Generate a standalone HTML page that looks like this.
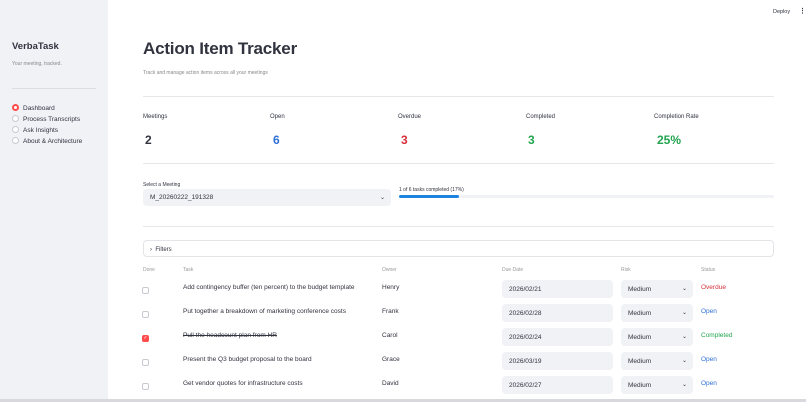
<!DOCTYPE html>
<html><head><meta charset="utf-8"><style>
*{box-sizing:border-box;margin:0;padding:0}
body{width:806px;height:402px;overflow:hidden;font-family:"Liberation Sans",sans-serif;color:#31333f;background:#fff;position:relative}
.a{position:absolute;white-space:nowrap;margin-top:1.5px}
.sb{position:absolute;left:0;top:0;width:108px;height:402px;background:#f0f2f6}
.hr{position:absolute;height:1px;background:#e6e7ea}
.rad{position:absolute;width:7px;height:7px;border-radius:50%;border:1px solid #c8cad0;background:#fff}
.box{position:absolute;height:18px;background:#f0f2f6;border-radius:4px;font-size:6.5px;color:#31333f;padding-left:7px;line-height:19px}
.cb{position:absolute;left:142px;width:7px;height:7px;border:1px solid #c8cad0;border-radius:2px;background:#fff}
.chev{position:absolute;font-size:6px;color:#31333f}
</style></head><body>
<div class="sb"></div>
<div class="a" style="left:12px;top:39px;font-size:9.5px;font-weight:bold;color:#31333f">VerbaTask</div>
<div class="a" style="left:12px;top:59px;font-size:5px;color:#888">Your meeting, tracked.</div>
<div class="hr" style="left:12px;top:88px;width:84px;background:#dcdde2"></div>
<div class="rad" style="left:12px;top:104px;border:2px solid #ff4b4b"></div>
<div class="a" style="left:23px;top:103px;font-size:6.5px">Dashboard</div>
<div class="rad" style="left:12px;top:115px"></div>
<div class="a" style="left:23px;top:114px;font-size:6.5px">Process Transcripts</div>
<div class="rad" style="left:12px;top:126px"></div>
<div class="a" style="left:23px;top:125px;font-size:6.5px">Ask Insights</div>
<div class="rad" style="left:12px;top:137px"></div>
<div class="a" style="left:23px;top:136px;font-size:6.5px">About &amp; Architecture</div>

<div class="a" style="left:773px;top:7px;font-size:5.5px">Deploy</div>
<div class="a" style="left:799px;top:5px;font-size:7px;font-weight:bold">⋮</div>

<div class="a" style="left:143px;top:37px;font-size:17px;font-weight:bold;color:#31333f;letter-spacing:-0.2px">Action Item Tracker</div>
<div class="a" style="left:143px;top:68px;font-size:5px;color:#888">Track and manage action items across all your meetings</div>
<div class="hr" style="left:143px;top:96px;width:631px"></div>
<div class="a" style="left:143px;top:112px;font-size:6px">Meetings</div>
<div class="a" style="left:270px;top:112px;font-size:6px">Open</div>
<div class="a" style="left:398px;top:112px;font-size:6px">Overdue</div>
<div class="a" style="left:526px;top:112px;font-size:6px">Completed</div>
<div class="a" style="left:654px;top:112px;font-size:6px">Completion Rate</div>
<div class="a" style="left:145px;top:131px;font-size:12px;font-weight:bold">2</div>
<div class="a" style="left:273px;top:131px;font-size:12px;font-weight:bold;color:#2f6fd6">6</div>
<div class="a" style="left:401px;top:131px;font-size:12px;font-weight:bold;color:#d62f3a">3</div>
<div class="a" style="left:528px;top:131px;font-size:12px;font-weight:bold;color:#22a450">3</div>
<div class="a" style="left:657px;top:131px;font-size:12px;font-weight:bold;color:#22a450">25%</div>
<div class="hr" style="left:143px;top:163px;width:631px"></div>

<div class="a" style="left:143px;top:180px;font-size:5px">Select a Meeting</div>
<div class="box" style="left:143px;top:189px;width:248px;height:17px;line-height:18px">M_20260222_191328</div>
<div class="chev" style="left:380px;top:194px">⌄</div>
<div class="a" style="left:399px;top:185px;font-size:5px">1 of 6 tasks completed (17%)</div>
<div style="position:absolute;left:399px;top:195px;width:375px;height:3px;background:#f0f2f6;border-radius:2px"></div>
<div style="position:absolute;left:399px;top:195px;width:60px;height:3px;background:#1c83e1;border-radius:2px"></div>
<div class="hr" style="left:143px;top:226px;width:631px"></div>

<div style="position:absolute;left:143px;top:240px;width:631px;height:17px;border:1px solid #e3e4e8;border-radius:4px"></div>
<div class="a" style="left:150px;top:245px;font-size:6px">›&nbsp;&nbsp;Filters</div>

<div class="a" style="left:143px;top:265px;font-size:5px;color:#999">Done</div>
<div class="a" style="left:183px;top:265px;font-size:5px;color:#999">Task</div>
<div class="a" style="left:382px;top:265px;font-size:5px;color:#999">Owner</div>
<div class="a" style="left:502px;top:265px;font-size:5px;color:#999">Due Date</div>
<div class="a" style="left:621px;top:265px;font-size:5px;color:#999">Risk</div>
<div class="a" style="left:701px;top:265px;font-size:5px;color:#999">Status</div>

<div class="cb" style="top:287px"></div>
<div class="a" style="left:183px;top:282px;font-size:6.5px">Add contingency buffer (ten percent) to the budget template</div>
<div class="a" style="left:382px;top:282px;font-size:6.5px">Henry</div>
<div class="box" style="left:502px;top:280px;width:111px">2026/02/21</div>
<div class="box" style="left:621px;top:280px;width:72px">Medium</div><div class="chev" style="left:682px;top:285px">⌄</div>
<div class="a" style="left:701px;top:282px;font-size:6.5px;color:#d62f3a">Overdue</div>

<div class="cb" style="top:311px"></div>
<div class="a" style="left:183px;top:306px;font-size:6.5px">Put together a breakdown of marketing conference costs</div>
<div class="a" style="left:382px;top:306px;font-size:6.5px">Frank</div>
<div class="box" style="left:502px;top:304px;width:111px">2026/02/28</div>
<div class="box" style="left:621px;top:304px;width:72px">Medium</div><div class="chev" style="left:682px;top:309px">⌄</div>
<div class="a" style="left:701px;top:306px;font-size:6.5px;color:#2f6fd6">Open</div>

<div class="cb" style="top:335px;background:#ff4b4b;border-color:#ff4b4b;color:#fff;font-size:5px;line-height:5px;text-align:center">✓</div>
<div class="a" style="left:183px;top:330px;font-size:6.5px;text-decoration:line-through">Pull the headcount plan from HR</div>
<div class="a" style="left:382px;top:330px;font-size:6.5px">Carol</div>
<div class="box" style="left:502px;top:328px;width:111px">2026/02/24</div>
<div class="box" style="left:621px;top:328px;width:72px">Medium</div><div class="chev" style="left:682px;top:333px">⌄</div>
<div class="a" style="left:701px;top:330px;font-size:6.5px;color:#22a450">Completed</div>

<div class="cb" style="top:359px"></div>
<div class="a" style="left:183px;top:354px;font-size:6.5px">Present the Q3 budget proposal to the board</div>
<div class="a" style="left:382px;top:354px;font-size:6.5px">Grace</div>
<div class="box" style="left:502px;top:352px;width:111px">2026/03/19</div>
<div class="box" style="left:621px;top:352px;width:72px">Medium</div><div class="chev" style="left:682px;top:357px">⌄</div>
<div class="a" style="left:701px;top:354px;font-size:6.5px;color:#2f6fd6">Open</div>

<div class="cb" style="top:383px"></div>
<div class="a" style="left:183px;top:378px;font-size:6.5px">Get vendor quotes for infrastructure costs</div>
<div class="a" style="left:382px;top:378px;font-size:6.5px">David</div>
<div class="box" style="left:502px;top:376px;width:111px">2026/02/27</div>
<div class="box" style="left:621px;top:376px;width:72px">Medium</div><div class="chev" style="left:682px;top:381px">⌄</div>
<div class="a" style="left:701px;top:378px;font-size:6.5px;color:#2f6fd6">Open</div>

<div style="position:absolute;left:0;top:399px;width:806px;height:3px;background:#d8d9dd"></div>
</body></html>
